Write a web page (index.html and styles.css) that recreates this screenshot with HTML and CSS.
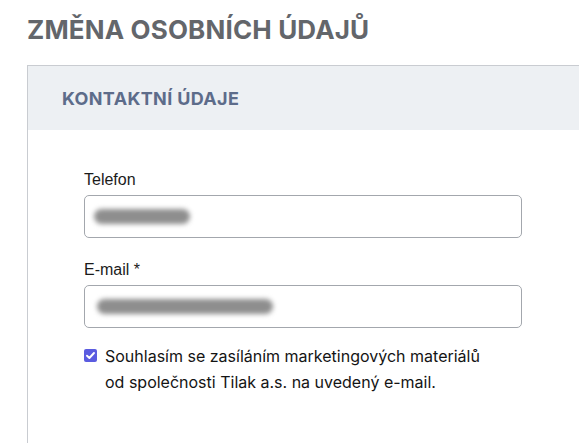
FILE: index.html
```html
<!DOCTYPE html>
<html lang="cs">
<head>
<meta charset="utf-8">
<link rel="stylesheet" href="styles.css">
</head>
<body>
<h1 class="page-title">ZMĚNA OSOBNÍCH ÚDAJŮ</h1>
<section class="card">
  <div class="card-header">KONTAKTNÍ ÚDAJE</div>
  <div class="card-body">
    <div class="field">
      <label class="field-label">Telefon</label>
      <div class="input"><span class="blur blur-phone"></span></div>
    </div>
    <div class="field field-last">
      <label class="field-label">E-mail *</label>
      <div class="input"><span class="blur blur-email"></span></div>
    </div>
    <label class="consent">
      <span class="checkbox"><svg width="13" height="13" viewBox="0 0 13 13"><path d="M3 6.7 L5.4 9 L10 4" fill="none" stroke="#fff" stroke-width="1.9" stroke-linecap="round" stroke-linejoin="round"/></svg></span>
      <span class="consent-text">Souhlasím se zasíláním marketingových materiálů<br>od společnosti Tilak a.s. na uvedený e-mail.</span>
    </label>
  </div>
</section>
</body>
</html>
```

FILE: styles.css
```css
html, body {
  margin: 0;
  padding: 0;
  background: #ffffff;
  overflow: hidden;
}
body {
  font-family: "Inter", "Liberation Sans", sans-serif;
  width: 579px;
  height: 443px;
  overflow: hidden;
}
.page-title {
  margin: 0;
  padding: 14px 0 0 27px;
  height: 65px;
  box-sizing: border-box;
  font-size: 26px;
  line-height: 32px;
  font-weight: 700;
  color: #63666b;
  letter-spacing: 0.15px;
}
.card {
  margin-left: 27px;
  width: 552px;
  height: 378px;
  border: 1px solid #c9ccd1;
  border-right: none;
  border-bottom: none;
  box-sizing: border-box;
  background: #fff;
}
.card-header {
  height: 64px;
  background: #edf0f3;
  padding-left: 34px;
  display: flex;
  align-items: center;
  font-size: 18px;
  font-weight: 700;
  color: #5d6c8a;
  letter-spacing: 0.35px;
}
.card-body {
  padding: 41px 0 0 56px;
}
.field {
  display: flex;
  flex-direction: column;
  margin-bottom: 23px;
}
.field-last {
  margin-bottom: 15px;
}
.field-label {
  font-family: "Liberation Sans", Arial, sans-serif;
  font-size: 16px;
  line-height: 18px;
  color: #1b1b1b;
  margin-bottom: 6px;
}
.input {
  width: 438px;
  height: 43px;
  box-sizing: border-box;
  border: 1px solid #a3a7ad;
  border-radius: 5px;
  display: flex;
  align-items: center;
  padding-left: 8px;
}
.blur {
  display: block;
  height: 15px;
  border-radius: 8px;
  background: #8e8e8e;
  filter: blur(2.5px);
}
.blur-phone { width: 96px; margin-left: 1px; }
.blur-email { width: 176px; margin-left: 4px; }
.consent {
  display: flex;
  align-items: flex-start;
  gap: 8px;
}
.checkbox {
  width: 13px;
  height: 13px;
  border-radius: 2px;
  background: #5b5ce0;
  margin-top: 6px;
  flex: none;
  display: flex;
}
.consent-text {
  font-size: 16px;
  line-height: 26px;
  color: #141414;
}
```
